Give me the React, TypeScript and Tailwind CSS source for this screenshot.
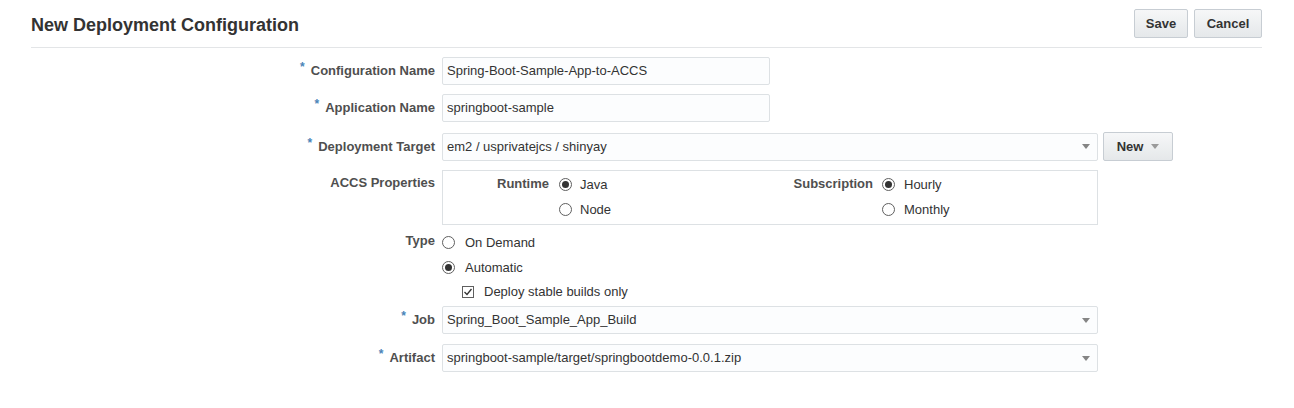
import React from "react";

function Req() {
  return (
    <span className="relative -top-[4px] mr-[6px] text-[12px] font-bold text-[#4a84b8]">*</span>
  );
}

function Caret({ light }: { light?: boolean }) {
  return (
    <svg width="8" height="5" viewBox="0 0 8 5" className="shrink-0">
      <path d="M0 0 L8 0 L4 5 Z" fill={light ? "#9a9a9a" : "#858585"} />
    </svg>
  );
}

function Radio({ checked }: { checked?: boolean }) {
  return (
    <span className="flex h-[13px] w-[13px] shrink-0 items-center justify-center rounded-full border border-[#5f5f5f] bg-white">
      {checked && <span className="h-[7px] w-[7px] rounded-full bg-[#333]" />}
    </span>
  );
}

function Option({ checked, label, gap = "ml-[9px]" }: { checked?: boolean; label: string; gap?: string }) {
  return (
    <div className="flex items-center">
      <Radio checked={checked} />
      <span className={`${gap} text-[13px] text-[#333]`}>{label}</span>
    </div>
  );
}

function Row({
  label,
  required,
  className = "",
  labelClass = "",
  alignTop,
  children,
}: {
  label: string;
  required?: boolean;
  className?: string;
  labelClass?: string;
  alignTop?: boolean;
  children: React.ReactNode;
}) {
  return (
    <div className={`flex ${alignTop ? "items-start" : "items-center"} ${className}`}>
      <div
        className={`flex w-[411px] shrink-0 items-center justify-end pr-[7px] text-[13px] font-bold text-[#4f4f4f] ${labelClass}`}
      >
        {required && <Req />}
        <span>{label}</span>
      </div>
      {children}
    </div>
  );
}

function TextInput({ value }: { value: string }) {
  return (
    <div className="flex h-[28px] w-[328px] items-center rounded-[2px] border border-[#dde1e4] bg-[#fcfdfe] px-[4px] text-[13px] text-[#333]">
      {value}
    </div>
  );
}

function Select({ value }: { value: string }) {
  return (
    <div className="flex h-[28px] w-[656px] items-center justify-between rounded-[2px] border border-[#dde1e4] bg-[#fcfdfe] pl-[4px] pr-[7px] text-[13px] text-[#333]">
      <span>{value}</span>
      <Caret />
    </div>
  );
}

function Button({ children, w }: { children: React.ReactNode; w: string }) {
  return (
    <button
      className={`flex h-[29px] ${w} items-center justify-center gap-[8px] rounded-[2px] border border-[#c7cdd3] bg-gradient-to-b from-[#f6f7f8] to-[#e5e8ea] text-[13px] font-bold text-[#333]`}
    >
      {children}
    </button>
  );
}

export default function App() {
  return (
    <div className="min-h-[408px] w-full bg-white font-['Liberation_Sans',Arial,sans-serif]">
      <div className="ml-[31px] w-[1231px]">
        <div className="flex h-[48px] items-start justify-between border-b border-[#e3e5e7]">
          <h1 className="mt-[15px] text-[18px] leading-[20px] font-bold text-[#333]">
            New Deployment Configuration
          </h1>
          <div className="mt-[9px] flex gap-[6px]">
            <Button w="w-[54px]">Save</Button>
            <Button w="w-[68px]">Cancel</Button>
          </div>
        </div>

        <Row label="Configuration Name" required className="mt-[9px]">
          <TextInput value="Spring-Boot-Sample-App-to-ACCS" />
        </Row>
        <Row label="Application Name" required className="mt-[9px]">
          <TextInput value="springboot-sample" />
        </Row>
        <Row label="Deployment Target" required className="mt-[10px]">
          <Select value="em2 / usprivatejcs / shinyay" />
          <div className="ml-[5px]">
            <Button w="w-[70px]">
              <span>New</span>
              <Caret light />
            </Button>
          </div>
        </Row>

        <Row label="ACCS Properties" alignTop labelClass="pt-[3px]" className="mt-[9px]">
          <div className="flex h-[55px] w-[656px] border border-[#dde1e4] pt-[1px]">
            <div className="flex w-[327px]">
              <div className="w-[106px] pt-[4px] text-right text-[13px] leading-[15px] font-bold text-[#4f4f4f]">
                Runtime
              </div>
              <div className="ml-[10px] flex flex-col">
                <div className="flex h-[25px] items-center">
                  <Option checked label="Java" gap="ml-[8px]" />
                </div>
                <div className="flex h-[25px] items-center">
                  <Option label="Node" gap="ml-[8px]" />
                </div>
              </div>
            </div>
            <div className="flex flex-1">
              <div className="w-[103px] pt-[4px] text-right text-[13px] leading-[15px] font-bold text-[#4f4f4f]">
                Subscription
              </div>
              <div className="ml-[9px] flex flex-col">
                <div className="flex h-[25px] items-center">
                  <Option checked label="Hourly" />
                </div>
                <div className="flex h-[25px] items-center">
                  <Option label="Monthly" />
                </div>
              </div>
            </div>
          </div>
        </Row>

        <Row label="Type" alignTop labelClass="pt-[1px]" className="mt-[5px]">
          <div className="flex flex-col">
            <div className="flex h-[25px] items-center">
              <Option label="On Demand" gap="ml-[10px]" />
            </div>
            <div className="flex h-[25px] items-center">
              <Option checked label="Automatic" gap="ml-[10px]" />
            </div>
            <div className="ml-[20px] flex h-[24px] items-center">
              <span className="flex h-[12px] w-[12px] items-center justify-center border border-[#5f5f5f] bg-white">
                <svg width="10" height="10" viewBox="0 0 10 10">
                  <path d="M1.5 5 L4 7.5 L8.5 2" fill="none" stroke="#333" strokeWidth="1.3" />
                </svg>
              </span>
              <span className="ml-[10px] text-[13px] text-[#333]">Deploy stable builds only</span>
            </div>
          </div>
        </Row>

        <Row label="Job" required className="mt-[2px]">
          <Select value="Spring_Boot_Sample_App_Build" />
        </Row>
        <Row label="Artifact" required className="mt-[10px]">
          <Select value="springboot-sample/target/springbootdemo-0.0.1.zip" />
        </Row>
      </div>
    </div>
  );
}
